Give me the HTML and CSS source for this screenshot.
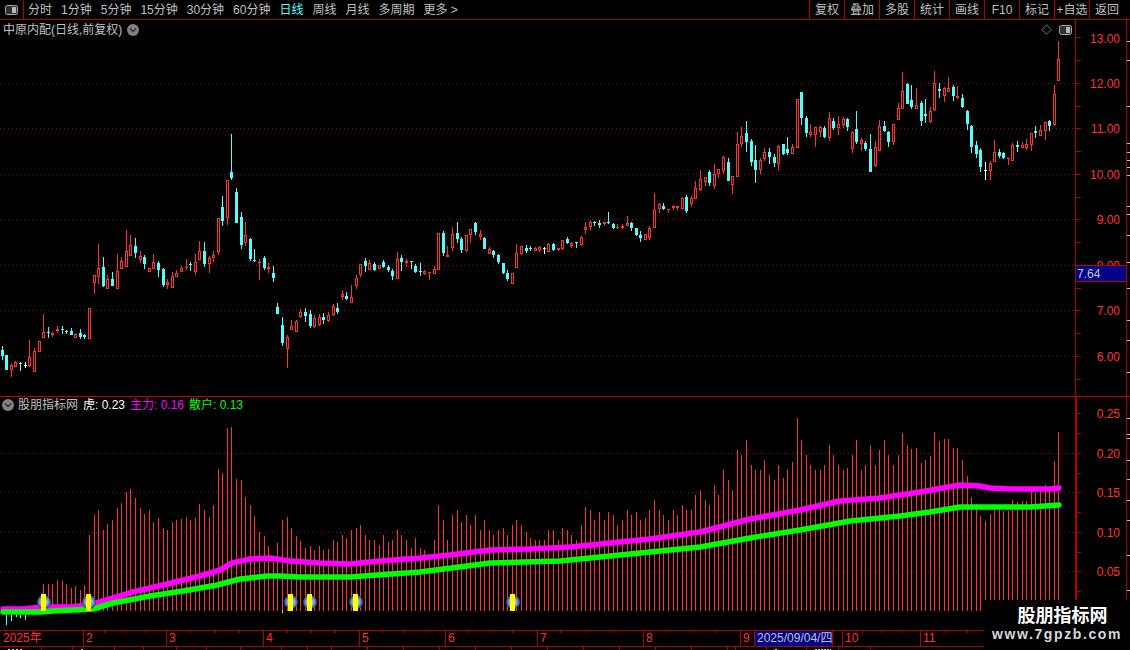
FILE: index.html
```html
<!DOCTYPE html>
<html lang="zh">
<head>
<meta charset="utf-8">
<title>中原内配</title>
<link rel="stylesheet" href="styles.css">
</head>
<body>
<div class="screen">
  <header class="toolbar">
    <div class="panel-toggle">
      <svg class="toggle-icon" viewBox="0 0 13 10"><rect x="0.5" y="0.5" width="12" height="9" rx="2" class="win-frame"/><rect x="7" y="2" width="4" height="6" class="win-half"/></svg>
    </div>
    <nav class="periods">
      <span>分时</span><span>1分钟</span><span>5分钟</span><span>15分钟</span><span>30分钟</span><span>60分钟</span><span class="active">日线</span><span>周线</span><span>月线</span><span>多周期</span><span>更多 &gt;</span>
    </nav>
    <nav class="actions">
      <span>复权</span><span>叠加</span><span>多股</span><span>统计</span><span>画线</span><span>F10</span><span>标记</span><span>+自选</span><span class="back">返回</span>
    </nav>
  </header>

  <section class="pane pane-price">
    <div class="plot">
      <svg id="priceChart" class="chart" viewBox="0 20 1075 376" preserveAspectRatio="none"></svg>
      <div class="pane-title">
        <span>中原内配(日线,前复权)</span>
        <svg class="chev" viewBox="0 0 12 12"><circle cx="6" cy="6" r="6" class="chev-disc"/><path d="M3 4.5 6 7.5 9 4.5" class="chev-mark"/></svg>
      </div>
      <div class="corner-tools">
        <svg class="diamond" viewBox="0 0 12 12"><path d="M6 .8 11.2 6 6 11.2 .8 6Z"/></svg>
        <svg class="toggle-icon" viewBox="0 0 13 10"><rect x="0.5" y="0.5" width="12" height="9" rx="2" class="win-frame"/><rect x="7" y="2" width="4" height="6" class="win-half"/></svg>
      </div>
    </div>
    <svg id="priceScale" class="scale" viewBox="1075 20 55 376" preserveAspectRatio="none"></svg>
  </section>

  <section class="pane pane-ind">
    <div class="plot">
      <svg id="indChart" class="chart" viewBox="0 397 1075 233" preserveAspectRatio="none"></svg>
      <div class="pane-title ind-title">
        <svg class="chev" viewBox="0 0 12 12"><circle cx="6" cy="6" r="6" class="chev-disc"/><path d="M3 4.5 6 7.5 9 4.5" class="chev-mark"/></svg>
        <span class="ind-name">股朋指标网</span>
        <span class="val-white">虎: 0.23</span>
        <span class="val-magenta">主力: 0.16</span>
        <span class="val-green">散户: 0.13</span>
      </div>
    </div>
    <svg id="indScale" class="scale" viewBox="1075 397 55 233" preserveAspectRatio="none"></svg>
  </section>

  <div class="date-axis">
    <span class="m m-83">2025年</span><span class="m m-83 sep">2</span><span class="m m-97 sep">3</span><span class="m m-96 sep">4</span><span class="m m-86 sep">5</span><span class="m m-92 sep">6</span><span class="m m-106 sep">7</span><span class="m m-97 sep">8</span><span class="m m-14 sep">9</span><span class="m m-date">2025/09/04/四</span><span class="m m-10"></span><span class="m m-78 sep">10</span><span class="m m-60 sep">11</span>
    <svg id="dateTicks" class="date-ticks" viewBox="0 0 1075 3"></svg>
  </div>

  <div class="tabs">
    <span class="tab t-42"><i class="mark"></i></span><span class="tab t-31"></span><span class="tab t-42"><i class="mark mark-short"></i></span><span class="tab t-29"></span><span class="tab t-33"></span><span class="tab t-30"></span><span class="tab t-34"></span><span class="tab t-41"></span><span class="tab t-26"></span><span class="tab t-24"></span><span class="tab t-36"></span><span class="tab t-36"></span><span class="tab t-36"></span><span class="tab t-36"></span><span class="tab t-36"></span><span class="tab t-36"></span><span class="tab t-36"></span><span class="tab t-36"></span><span class="tab t-36"></span><span class="tab t-36"></span><span class="tab t-36"></span><span class="tab t-8"></span><span class="tab t-31"></span><span class="tab t-40"><i class="mark mark-short"></i></span><span class="tab t-32"><i class="mark mark-cyan"></i></span><span class="tab t-32"></span>
  </div>

  <aside class="watermark">
    <strong>股朋指标网</strong>
    <span>www.7gpzb.com</span>
  </aside>
</div>
<script src="chart.js"></script>
</body>
</html>
```
FILE: styles.css
```css
* { box-sizing: border-box; }
html, body { margin: 0; padding: 0; background: #000; }
body {
  width: 1130px;
  height: 650px;
  overflow: hidden;
  color: #c0c0c0;
  font: 12px/14px "Liberation Sans", "Noto Sans CJK SC", sans-serif;
}
.screen {
  position: relative;
  width: 1130px;
  height: 650px;
  display: flex;
  flex-direction: column;
  overflow: hidden;
}

/* toolbar */
.toolbar {
  flex: 0 0 20px;
  display: flex;
  align-items: stretch;
  border-bottom: 1px solid #b00000;
}
.panel-toggle {
  width: 24px;
  display: flex;
  align-items: center;
  justify-content: center;
  border-right: 1px solid #b00000;
}
.toggle-icon { width: 13px; height: 10px; display: block; }
.win-frame { fill: #303030; stroke: #a8a8a8; stroke-width: 1; }
.win-half { fill: #b8b8b8; }
.periods {
  display: flex;
  align-items: center;
  gap: 9px;
  padding-left: 4px;
  white-space: nowrap;
}
.periods .active { color: #54ffff; }
.actions {
  margin-left: auto;
  display: flex;
  align-items: stretch;
}
.actions span {
  width: 35px;
  border-left: 1px solid #b00000;
  display: flex;
  align-items: center;
  justify-content: center;
  white-space: nowrap;
}
.actions .back { width: 41px; padding-right: 6px; }

/* panes */
.pane { display: flex; }
.pane-price { flex: 0 0 377px; border-bottom: 1px solid #c00000; }
.pane-ind { flex: 0 0 234px; border-bottom: 1px solid #b00000; }
.plot { position: relative; width: 1075px; height: 100%; }
.chart { position: absolute; inset: 0; width: 1075px; height: 100%; display: block; }
.scale { width: 55px; height: 100%; display: block; }
.pane-title {
  position: relative;
  display: flex;
  align-items: center;
  gap: 5px;
  padding: 2px 0 0 3px;
  height: 18px;
  white-space: nowrap;
}
.chev { width: 12px; height: 12px; display: block; }
.chev-disc { fill: #808080; }
.chev-mark { fill: none; stroke: #303030; stroke-width: 1.4; }
.ind-title { padding: 0 0 0 2px; height: 15px; margin-top: 0; gap: 0; }
.ind-name { margin-left: 4px; width: 65px; }
.val-white { color: #fff; width: 47px; }
.val-magenta { color: #ff00ff; width: 59px; }
.val-green { color: #00ff00; }
.corner-tools {
  position: absolute;
  top: 4px;
  right: 3px;
  display: flex;
  align-items: center;
  gap: 7px;
}
.diamond { width: 11px; height: 11px; display: block; }
.diamond path { fill: none; stroke: #808080; stroke-width: 1; }

/* date axis */
.date-axis {
  position: relative;
  flex: 0 0 16px;
  display: flex;
  border-bottom: 1px solid #b00000;
  color: #ff3232;
}
.m { display: block; padding-left: 3px; line-height: 15px; overflow: hidden; white-space: nowrap; }
.sep { border-left: 1px solid #b00000; padding-left: 2px; }
.m-83 { width: 83px; }
.m-97 { width: 97px; }
.m-96 { width: 96px; }
.m-86 { width: 86px; }
.m-92 { width: 92px; }
.m-106 { width: 106px; }
.m-14 { width: 14px; }
.m-10 { width: 10px; border-left: 1px solid #b00000; }
.m-78 { width: 78px; }
.m-60 { width: 60px; }
.m-date {
  width: 78px;
  background: #000088;
  color: #c0c0c0;
  border-left: 1px solid #b00000;
  padding-left: 2px;
}
.date-ticks { position: absolute; left: 0; top: 0; width: 1075px; height: 3px; }

/* bottom tabs: only their top edge is on screen */
.tabs { flex: 1; display: flex; overflow: hidden; }
.tab { border-right: 1px solid #b00000; padding: 2px 0 0 8px; }
.mark {
  display: block;
  width: 14px;
  height: 1px;
  background: repeating-linear-gradient(90deg, #d0d0d0 0 2px, transparent 2px 4px);
}
.mark-short { width: 4px; }
.mark-cyan { width: 16px; background: repeating-linear-gradient(90deg, #54ffff 0 2px, transparent 2px 3px); }
.t-8 { width: 8px; padding: 0; }
.t-24 { width: 24px; }
.t-26 { width: 26px; }
.t-29 { width: 29px; }
.t-30 { width: 30px; }
.t-31 { width: 31px; }
.t-32 { width: 32px; }
.t-33 { width: 33px; }
.t-34 { width: 34px; }
.t-36 { width: 36px; }
.t-40 { width: 40px; }
.t-41 { width: 41px; }
.t-42 { width: 42px; }

/* watermark */
.watermark {
  position: absolute;
  left: 984px;
  top: 600px;
  width: 146px;
  height: 50px;
  background: #000;
  display: flex;
  flex-direction: column;
  align-items: center;
  color: #fff;
}
.watermark strong {
  font: bold 18px/22px "Noto Sans CJK SC", sans-serif;
  margin-top: 3px;
  padding-left: 11px;
}
.watermark span {
  font: bold 14px/17px "Liberation Sans", sans-serif;
  letter-spacing: 1.6px;
  color: #d8d8d8;
  margin-top: 1px;
}
```
FILE: chart.js
```js
var NS = 'http://www.w3.org/2000/svg';
var RED = '#ff3232', CYAN = '#54fcfc', DARK = '#b00000', DOT = '#7c1818';

function el(parent, name, attrs, text) {
  var n = document.createElementNS(NS, name);
  for (var k in attrs) n.setAttribute(k, attrs[k]);
  if (text !== undefined) n.textContent = text;
  parent.appendChild(n);
  return n;
}
function box(p, x, y, w, h, fill) {
  return el(p, 'rect', { x: x, y: y, width: w, height: h, fill: fill, 'shape-rendering': 'crispEdges' });
}
function dotted(p, y) {
  el(p, 'line', { x1: 0, x2: 1075, y1: y + 0.5, y2: y + 0.5, stroke: DOT, 'stroke-dasharray': '1 3', 'shape-rendering': 'crispEdges' });
}

/* x, type, bodyTop, bodyBottom, high, low, volumeTop */
var D = [
[2,'c',350,356,346,360,607],[6,'c',355,370,355,370,607],[11,'r',365,370,364,377,607],[15,'r',362,367,361,367,607],
[20,'c',363,364,362,371,607],[25,'w',365,366,362,368,607],[29,'r',357,366,340,367,607],[34,'r',351,372,348,372,605],
[39,'r',341,352,341,352,603],[43,'r',332,338,314,338,584],[48,'c',332,333,327,338,584],[52,'r',333,335,332,337,584],
[57,'r',329,331,326,333,580],[62,'c',329,330,326,334,581],[66,'c',331,332,330,334,584],[71,'c',331,335,328,335,588],
[75,'r',334,338,334,338,586],[80,'c',333,337,329,339,590],[84,'c',335,337,334,339,585],[89,'r',308,339,308,339,535],
[94,'r',275,283,275,294,515],[98,'r',268,277,244,284,510],[103,'c',267,286,257,287,530],[107,'r',279,289,275,289,524],
[112,'c',279,286,272,286,520],[117,'r',271,289,254,289,508],[121,'r',261,269,257,269,503],[126,'r',251,267,230,267,492],
[130,'r',245,256,235,256,489],[135,'c',246,253,238,258,498],[140,'r',256,260,251,263,508],[144,'c',257,264,255,269,514],
[149,'r',268,272,268,272,510],[153,'r',262,269,254,269,522],[158,'c',263,270,261,277,518],[163,'c',269,285,268,287,528],
[167,'r',282,285,279,289,530],[172,'r',276,288,272,288,522],[176,'r',273,277,270,277,520],[181,'r',268,272,266,272,519],
[186,'r',267,268,259,270,517],[190,'c',264,265,262,271,520],[195,'r',262,272,254,275,518],[199,'r',251,260,241,260,504],
[204,'c',251,264,242,267,510],[209,'r',258,264,256,273,517],[213,'r',255,258,251,262,505],[218,'r',218,252,218,255,469],
[222,'c',207,221,196,226,473],[227,'r',180,218,180,225,428],[231,'c',172,178,134,180,427],[236,'c',192,223,188,223,479],
[241,'c',217,245,212,249,480],[245,'r',235,243,222,246,497],[250,'c',239,259,238,261,505],[254,'c',260,261,249,262,516],
[259,'r',262,263,259,280,532],[264,'c',258,268,256,270,536],[268,'r',267,269,263,273,546],[273,'c',273,278,266,282,556],
[277,'c',307,314,303,314,543],[282,'c',325,343,317,346,520],[287,'r',337,349,335,368,517],[291,'r',326,330,320,330,528],
[296,'r',321,332,320,332,536],[300,'r',312,317,309,318,541],[305,'c',312,316,308,322,548],[310,'c',314,326,310,328,546],
[314,'r',318,327,315,328,550],[319,'r',317,325,314,326,546],[323,'c',317,320,313,324,550],[328,'r',315,321,312,322,549],
[333,'r',306,315,304,316,540],[337,'c',308,312,303,314,542],[342,'r',294,297,290,300,535],[346,'c',296,299,292,300,538],
[351,'r',297,303,285,303,530],[356,'r',278,286,275,289,528],[360,'r',264,275,264,277,525],[365,'c',261,266,258,272,535],
[369,'r',263,270,260,270,540],[374,'c',264,270,262,271,540],[379,'r',265,269,265,269,545],[383,'c',262,267,260,268,535],
[388,'c',267,270,265,272,542],[392,'c',271,276,269,280,540],[397,'r',259,279,252,279,530],[401,'c',258,262,255,271,535],
[406,'r',261,263,259,267,540],[411,'c',261,262,261,269,548],[415,'c',266,272,264,273,538],[420,'c',271,272,263,276,548],
[424,'r',271,274,270,275,550],[429,'r',272,273,272,280,555],[434,'r',269,274,266,274,540],[438,'r',233,270,233,270,505],
[443,'c',233,253,231,256,520],[447,'r',255,257,246,257,540],[452,'r',234,248,227,251,515],[457,'c',233,239,222,243,510],
[461,'c',239,250,237,253,522],[466,'r',235,251,235,252,515],[470,'r',229,235,229,243,525],[475,'c',223,232,222,235,515],
[480,'r',234,237,230,240,530],[484,'c',238,249,237,249,520],[489,'r',249,254,247,254,530],[493,'c',251,255,250,258,535],
[498,'c',255,262,254,264,530],[503,'c',263,273,263,274,528],[507,'c',273,279,270,281,535],[512,'r',273,284,273,284,525],
[516,'r',253,268,244,268,520],[521,'r',246,254,246,255,525],[526,'c',248,251,245,253,532],[530,'c',248,249,246,251,538],
[535,'r',248,251,247,251,540],[539,'r',247,250,246,252,540],[544,'w',248,249,247,254,540],[548,'r',244,252,243,252,530],
[553,'c',244,250,243,251,530],[558,'r',248,250,248,251,540],[562,'r',240,249,240,250,528],[567,'c',239,243,237,244,530],
[571,'r',243,246,242,248,535],[576,'c',242,243,242,248,540],[581,'r',237,245,236,246,525],[585,'r',227,230,222,234,507],
[590,'r',222,227,220,230,510],[594,'c',222,223,221,226,520],[599,'c',223,225,220,228,512],[604,'r',222,224,222,226,520],
[608,'c',222,223,212,224,512],[613,'c',224,228,223,229,515],[617,'r',227,228,224,229,525],[622,'r',226,228,224,229,520],
[627,'r',223,226,216,226,510],[631,'c',223,228,222,231,515],[636,'c',228,235,228,236,512],[640,'c',235,238,231,242,520],
[645,'r',234,240,234,240,518],[649,'r',228,238,226,240,510],[654,'r',210,228,193,228,500],[659,'r',204,209,203,213,510],
[663,'c',206,209,203,210,515],[668,'r',209,210,209,213,520],[673,'r',206,208,205,210,510],[677,'r',206,208,206,211,515],
[682,'r',198,209,197,209,505],[686,'c',197,211,195,213,510],[691,'r',198,204,196,207,510],[695,'r',188,199,181,199,495],
[700,'r',179,190,170,191,490],[705,'r',177,182,177,186,500],[709,'c',172,183,170,186,505],[714,'r',174,186,164,189,485],
[718,'r',169,174,169,178,495],[723,'r',157,171,156,174,470],[728,'c',162,181,158,181,480],[732,'r',176,185,176,194,490],
[737,'r',144,177,132,177,450],[741,'r',136,144,127,147,455],[746,'c',133,142,121,152,440],[751,'c',141,162,139,166,465],
[755,'c',160,170,145,183,470],[760,'r',160,170,158,174,470],[764,'r',152,159,148,161,460],[769,'c',152,157,148,164,475],
[774,'c',157,163,154,167,480],[778,'r',146,164,145,170,465],[783,'c',144,154,144,155,478],[787,'c',149,153,137,155,470],
[792,'r',147,154,144,154,462],[797,'r',99,148,99,148,418],[801,'c',92,118,92,125,440],[806,'c',118,133,116,137,455],
[810,'r',132,135,124,137,465],[815,'r',127,135,127,147,470],[820,'r',127,132,126,137,470],[824,'c',128,137,126,138,465],
[829,'r',118,138,112,141,445],[833,'c',121,128,118,130,455],[838,'r',124,128,116,135,465],[843,'r',119,125,117,128,470],
[847,'c',119,127,118,131,468],[852,'r',132,149,131,153,455],[856,'c',129,142,111,144,440],[861,'r',140,144,138,151,470],
[865,'c',143,149,141,151,465],[870,'c',149,172,134,172,445],[875,'r',147,166,141,167,465],[879,'r',126,151,120,151,450],
[884,'c',126,131,121,132,440],[888,'c',132,142,131,147,455],[893,'r',124,142,124,145,465],[898,'r',108,120,103,120,455],
[902,'r',91,109,72,109,433],[907,'c',84,104,83,104,445],[911,'c',100,107,85,109,449],[916,'r',105,109,88,109,448],
[921,'c',103,121,101,126,463],[925,'c',114,116,99,123,460],[930,'r',111,122,107,123,456],[934,'r',83,110,71,111,432],
[939,'c',89,91,83,98,441],[944,'r',88,96,87,102,439],[948,'r',88,92,77,92,439],[953,'c',87,96,85,101,448],
[957,'r',96,98,86,99,448],[962,'c',98,107,94,108,460],[967,'c',111,124,110,130,476],[971,'c',126,147,125,153,497],
[976,'c',145,154,141,158,504],[980,'c',150,167,148,172,516],[985,'w',170,171,162,180,521],[990,'r',163,171,161,180,514],
[994,'r',152,162,140,162,504],[999,'c',152,156,149,158,510],[1003,'c',153,158,152,159,511],[1008,'r',158,159,158,165,511],
[1012,'r',145,161,143,161,500],[1017,'c',145,147,141,152,502],[1022,'r',145,148,142,148,501],[1026,'r',144,148,139,150,501],
[1031,'r',133,145,133,151,489],[1035,'c',131,133,126,138,493],[1040,'r',130,136,125,136,490],[1045,'r',122,131,122,140,485],
[1049,'c',121,126,120,131,490],[1054,'r',94,125,85,126,461],[1058,'r',59,81,41,81,432]
];

/* price pane */
var pc = document.getElementById('priceChart');
[83, 128, 174, 219, 265, 310, 356].forEach(function (y) { dotted(pc, y); });
D.forEach(function (d) {
  var x = d[0], t = d[1], col = t === 'r' ? RED : t === 'c' ? CYAN : '#ffffff';
  box(pc, x, d[4], 1, d[5] - d[4], col);
  if (t === 'w') { box(pc, x - 1, d[2], 3, 1, col); return; }
  if (t === 'c') { box(pc, x - 1, d[2], 3, Math.max(1, d[3] - d[2]), col); return; }
  box(pc, x - 1, d[2], 3, Math.max(1, d[3] - d[2]), col);
  if (d[3] - d[2] > 2) box(pc, x, d[2] + 1, 1, d[3] - d[2] - 2, '#000');
});

/* indicator pane */
var ic = document.getElementById('indChart');
[453, 492, 532, 571].forEach(function (y) { dotted(ic, y); });
D.forEach(function (d) { box(ic, d[0], d[6], 1, 611 - d[6], RED); });
[[6, 615, 625], [11, 615, 621], [16, 615, 617], [20, 615, 618], [25, 615, 620], [282, 610, 613]].forEach(function (b) {
  box(ic, b[0], b[1], 1, b[2] - b[1], CYAN);
});
function thick(points, colour) {
  el(ic, 'polyline', {
    points: points.map(function (p) { return p.join(','); }).join(' '),
    fill: 'none', stroke: colour, 'stroke-width': 5.5, 'stroke-linejoin': 'round', 'stroke-linecap': 'round'
  });
}
thick([[3,609],[22,609],[44,607],[70,607],[89,605],[100,602],[133,592],[167,584],[200,576],[220,570],[232,563],[250,559],[270,558],[290,561],[320,563],[350,564],[380,561],[420,558],[450,555],[490,550],[530,549],[570,547],[610,543],[650,539],[700,532],[750,519],[800,510],[840,501],[880,498],[920,492],[960,485],[980,486],[990,488],[1010,489],[1050,489],[1059,488]], '#ff00ff');
thick([[3,612],[40,612],[53,611],[73,610],[93,609],[113,603],[150,596],[183,591],[217,585],[240,579],[267,576],[280,576],[300,577],[350,577],[377,575],[420,572],[490,563],[560,561],[640,553],[700,547],[750,538],[800,530],[850,521],[900,516],[930,512],[960,507],[1030,507],[1059,505]], '#00ff00');

var defs = el(ic, 'defs', {});
var g = el(defs, 'radialGradient', { id: 'ball' });
el(g, 'stop', { offset: '0', 'stop-color': '#e0e8f8' });
el(g, 'stop', { offset: '0.55', 'stop-color': '#8aa4d8' });
el(g, 'stop', { offset: '1', 'stop-color': '#24407c' });
[44, 89, 291, 310, 356, 513].forEach(function (x) {
  el(ic, 'circle', { cx: x, cy: 602, r: 7, fill: 'url(#ball)' });
  box(ic, x - 3, 594, 5, 17, '#ffff00');
});

/* scales */
function scale(id, ticks, labels, thickAxis) {
  var s = document.getElementById(id);
  box(s, 1075, 0, thickAxis ? 2 : 1, 700, DARK);
  box(s, 1126, 0, 1, 700, DARK);
  ticks.forEach(function (y) { box(s, 1076, y, 5, 1, DARK); });
  labels.forEach(function (l) {
    el(s, 'text', { x: 1120, y: l[1] + 4.5, 'text-anchor': 'end', fill: RED, 'font-size': 12, 'font-family': '"Liberation Sans", sans-serif' }, l[0]);
  });
  return s;
}
var ps = scale('priceScale',
  [37, 60, 83, 106, 128, 151, 174, 197, 219, 242, 265, 288, 310, 333, 356, 379],
  [['13.00', 38], ['12.00', 83], ['11.00', 128.5], ['10.00', 174], ['9.00', 219.5], ['8.00', 265], ['7.00', 310.5], ['6.00', 356]]);
[41, 60, 106, 143, 152, 160, 167, 175, 206, 214, 235, 262, 288, 320, 340, 372].forEach(function (y) { box(ps, 1127, y, 3, 1, '#c0c0c0'); });
box(ps, 1076, 265, 50, 17, '#000088');
box(ps, 1076, 265, 50, 1, '#c80000');
box(ps, 1076, 281, 50, 1, '#c80000');
el(ps, 'text', { x: 1077, y: 278, fill: '#c8c8c8', 'font-size': 12, 'font-family': '"Liberation Sans", sans-serif' }, '7.64');

var is = scale('indScale',
  [413, 433, 453, 473, 492, 512, 532, 552, 571, 591],
  [['0.25', 413.5], ['0.20', 453], ['0.15', 492.5], ['0.10', 532], ['0.05', 571.5]], true);
[418, 434, 438, 460, 479, 500, 520, 555, 590].forEach(function (y) { box(is, 1127, y, 3, 1, '#c0c0c0'); });

/* date axis minor ticks */
var dt = document.getElementById('dateTicks');
[104, 125, 145, 190, 215, 239, 287, 311, 335, 382, 403, 425, 468, 490, 512, 560, 585, 610, 665, 690, 715, 862, 881, 901, 945, 967, 990].forEach(function (x) {
  box(dt, x, 0, 1, 2, DARK);
});
```
